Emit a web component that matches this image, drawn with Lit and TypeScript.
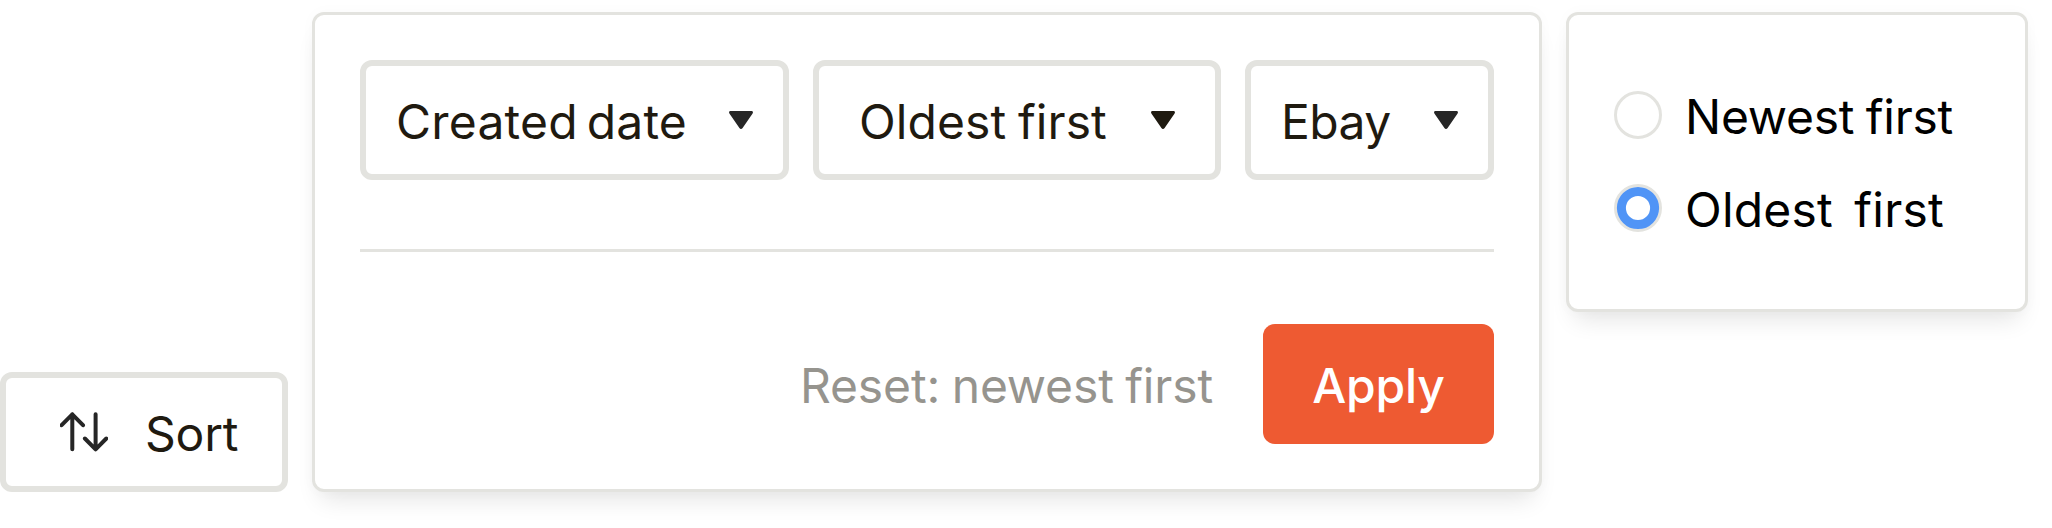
import { LitElement, html, css, svg } from "lit";
import { customElement, property, state } from "lit/decorators.js";

@customElement("select-box")
class SelectBox extends LitElement {
  @property() label = "";
  static styles = css`
    :host { display: block; }
    .box {
      box-sizing: border-box; width: 100%; height: 120px;
      display: flex; align-items: center; justify-content: space-between;
      border: 6px solid #e3e3df; border-radius: 12px; background: #fff;
      padding: 0 var(--pad, 30px);
      color: #1f1a10; font: inherit; letter-spacing: inherit; word-spacing: inherit; white-space: nowrap;
    }
    .label { line-height: 60px; padding-top: 4px; }
    .caret { display: block; width: 24px; height: 18px; fill: var(--caret, #262626); }
  `;
  render() {
    return html`<button class="box">
      <span class="label">${this.label}</span>
      <svg class="caret" viewBox="0 0 24 18"><path d="M1.5 0h21c1.3 0 1.9 1.3 1.1 2.4L13.6 17c-.8 1.2-2.4 1.2-3.2 0L.4 2.4C-.4 1.3.2 0 1.5 0z"/></svg>
    </button>`;
  }
}

@customElement("radio-row")
class RadioRow extends LitElement {
  @property() label = "";
  @property({ type: Boolean }) checked = false;
  static styles = css`
    :host { display: flex; align-items: center; gap: 23px; height: 60px; white-space: pre; }
    .dot { display: block; width: 48px; height: 48px; flex: none; }
    .label { line-height: 60px; padding-top: 4px; }
  `;
  render() {
    return html`<svg class="dot" viewBox="0 0 48 48">
        <circle cx="24" cy="24" r="22.5" fill="#fff" stroke="#e3e3df" stroke-width="3"/>
        ${this.checked ? svg`<circle cx="24" cy="24" r="16.6" fill="none" stroke="#5094f6" stroke-width="9"/>` : ""}
      </svg><span class="label">${this.label}</span>`;
  }
}

@customElement("app-root")
class AppRoot extends LitElement {
  @state() private order = "oldest";
  static styles = css`
    :host {
      display: flex; gap: 24px; align-items: flex-start; box-sizing: border-box;
      width: 2052px; height: 528px; padding-top: 12px; overflow: hidden;
      background: #fff; font: 400 48px/60px Inter, sans-serif;
    }
    .sort {
      box-sizing: border-box; width: 288px; height: 120px; margin-top: 360px; flex: none;
      display: flex; align-items: center; gap: 37px; padding: 0 0 0 54px;
      border: 6px solid #e3e3df; border-radius: 12px; background: #fff;
      color: #1f1a10; font: inherit; letter-spacing: -0.2px;
    }
    .arrows { display: block; width: 48px; height: 48px; fill: none; stroke: #262626; stroke-width: 4; stroke-linecap: round; stroke-linejoin: round; }
    .text { line-height: 60px; padding-top: 4px; }
    .card {
      box-sizing: border-box; flex: none; background: #fff;
      border: 3px solid #e3e3df; border-radius: 12px;
      box-shadow: 0 16px 24px -9px rgba(0, 0, 0, .11), 0 0 15px rgba(0, 0, 0, .025);
    }
    .panel { width: 1230px; height: 480px; padding: 45px; }
    .selects { display: flex; gap: 24px; }
    .created { width: 429px; letter-spacing: .2px; word-spacing: -4.8px; }
    .direction { width: 408px; letter-spacing: .08px; word-spacing: -1.8px; --pad: 40px; --caret: #1f1a10; }
    .shop { width: 249px; letter-spacing: -.6px; }
    .rule { height: 3px; margin: 69px 0 72px; background: #e3e3df; }
    .actions { display: flex; justify-content: flex-end; align-items: center; gap: 50px; }
    .reset { color: #96948e; letter-spacing: -.15px; word-spacing: -1.8px; white-space: nowrap; }
    .apply {
      width: 231px; height: 120px; padding: 0; border: 0; border-radius: 12px;
      background: #ee5a32; color: #fff; font: inherit; font-weight: 550; letter-spacing: -.2px;
    }
    .options { width: 462px; height: 300px; padding: 70px 45px; display: flex; flex-direction: column; gap: 33px; color: #000; }
    .newest { letter-spacing: -.25px; word-spacing: -1.7px; }
    .oldest { letter-spacing: .2px; word-spacing: -3px; }
  `;
  render() {
    return html`
      <button class="sort">
        <svg class="arrows" viewBox="0 0 48 48"><path d="M12.300 41.300V6.300M1.600 17.200L12.300 6.300l10.700 10.900M35.600 6.300v35M24.900 30.500l10.700 10.800 10.700-10.800"/></svg>
        <span class="text">Sort</span>
      </button>
      <section class="card panel">
        <div class="selects">
          <select-box class="created" label="Created date"></select-box>
          <select-box class="direction" label="Oldest first"></select-box>
          <select-box class="shop" label="Ebay"></select-box>
        </div>
        <div class="rule"></div>
        <div class="actions">
          <span class="text reset">Reset: newest first</span>
          <button class="apply"><div class="text">Apply</div></button>
        </div>
      </section>
      <section class="card options">
        <radio-row class="newest" label="Newest first" ?checked=${this.order === "newest"}></radio-row>
        <radio-row class="oldest" label="Oldest  first" ?checked=${this.order === "oldest"}></radio-row>
      </section>`;
  }
}
